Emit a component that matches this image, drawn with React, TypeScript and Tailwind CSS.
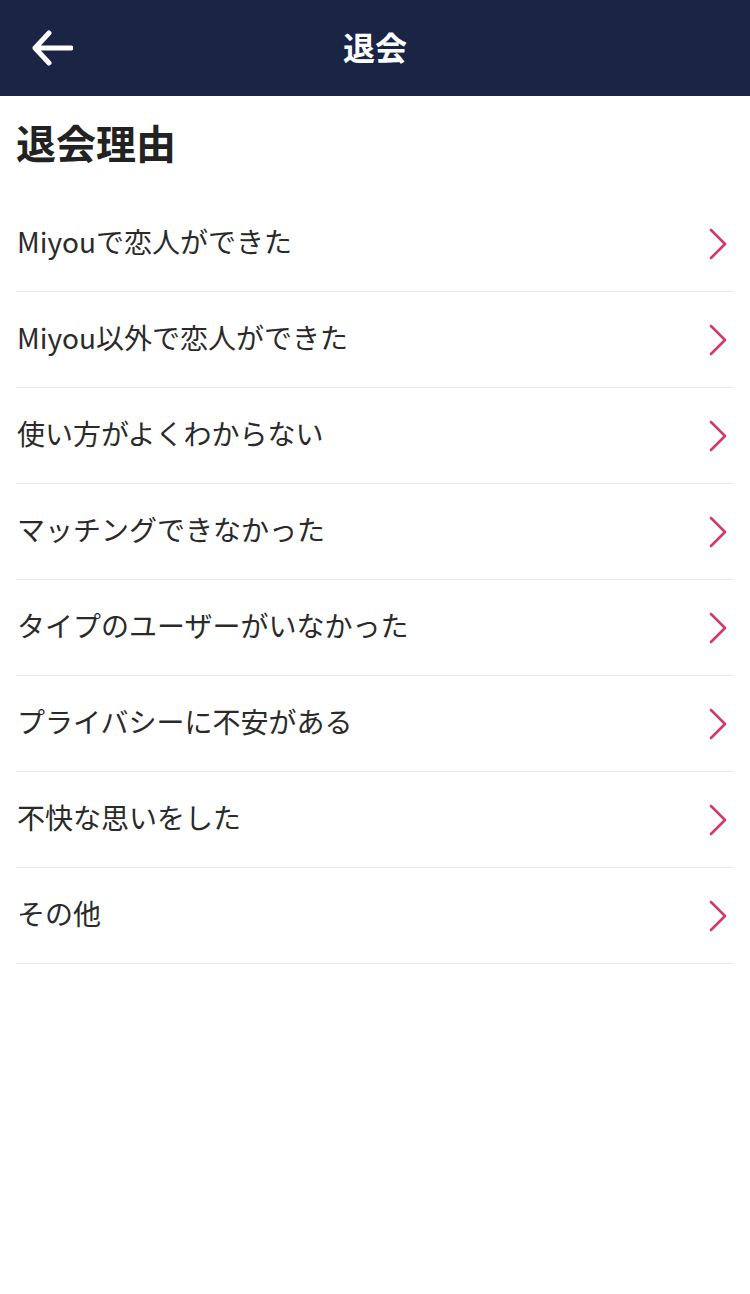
const reasons = [
  "Miyouで恋人ができた",
  "Miyou以外で恋人ができた",
  "使い方がよくわからない",
  "マッチングできなかった",
  "タイプのユーザーがいなかった",
  "プライバシーに不安がある",
  "不快な思いをした",
  "その他",
];

export default function App() {
  return (
    <div
      className="w-[750px] min-h-[1294px] bg-white text-[#222]"
      style={{ fontFamily: '"Noto Sans CJK JP", "Noto Sans", sans-serif' }}
    >
      <header className="relative h-[96px] bg-[#1a2444] flex items-center justify-center">
        <button className="absolute left-[30px] top-[28px] w-[44px] h-[40px] flex items-center justify-center">
          <svg width="42" height="36" viewBox="0 0 42 36" fill="none">
            <path
              d="M40 18H5M18 3L4 18l14 15"
              stroke="white"
              strokeWidth="5"
              strokeLinecap="round"
              strokeLinejoin="round"
            />
          </svg>
        </button>
        <h1 className="text-[32px] font-bold text-white leading-none mb-[4px]">退会</h1>
      </header>

      <div className="h-[100px] flex items-center px-4 pb-[8px]">
        <h2 className="text-[40px] font-bold leading-none text-[#222]">退会理由</h2>
      </div>

      <ul className="px-4">
        {reasons.map((r) => (
          <li
            key={r}
            className="h-[96px] border-b border-[#e6e6e6] flex items-center justify-between pl-[1px]"
          >
            <span className="text-[28px] leading-none font-normal text-[#2a2a2a] mb-[5px]">{r}</span>
            <svg width="20" height="32" viewBox="0 0 20 32" fill="none" className="mr-[6px]">
              <path d="M3 2l14 14L3 30" stroke="#d0396f" strokeWidth="2.6" strokeLinecap="round" strokeLinejoin="round" />
            </svg>
          </li>
        ))}
      </ul>
    </div>
  );
}
